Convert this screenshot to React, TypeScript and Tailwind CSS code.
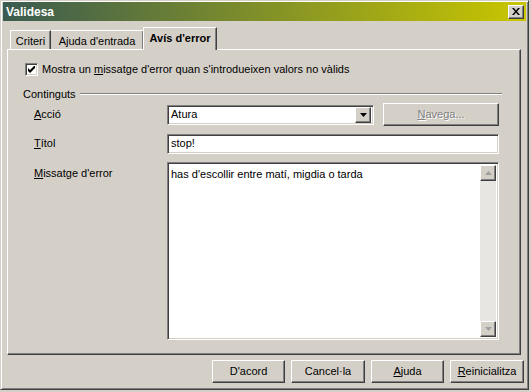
import React from "react";

const raised =
  "border border-t-white border-l-white border-r-[#404040] border-b-[#404040] shadow-[inset_-1px_-1px_0_#808080]";
const sunken =
  "border border-t-[#808080] border-l-[#808080] border-r-white border-b-white shadow-[inset_1px_1px_0_#404040,inset_-1px_-1px_0_#d4d0c8]";

function U({ c }: { c: string }) {
  return <span className="underline underline-offset-[1px]">{c}</span>;
}

function Btn({ children, w, disabled }: { children: React.ReactNode; w: string; disabled?: boolean }) {
  return (
    <div
      className={`${raised} ${w} h-[23px] flex items-center justify-center bg-[#d4d0c8] ${
        disabled ? "text-[#808080] [text-shadow:1px_1px_0_#fff]" : "text-black"
      }`}
    >
      {children}
    </div>
  );
}

export default function App() {
  return (
    <div
      className="w-[531px] h-[392px] bg-[#d4d0c8] overflow-hidden text-[11px] text-black"
      style={{ fontFamily: '"Liberation Sans", Arial, sans-serif' }}
    >
      <div className="w-[529px] h-[390px] border border-t-[#d4d0c8] border-l-[#d4d0c8] border-r-[#404040] border-b-[#404040] shadow-[inset_1px_1px_0_#fff,inset_-1px_-1px_0_#808080] p-[2px] flex flex-col">
        {/* title bar */}
        <div className="h-[19px] -mt-[1px] flex items-center justify-between pl-[3px] pr-[2px] bg-[linear-gradient(to_right,#3a5b50,#c9c600)]">
          <span className="text-white font-bold text-[12px] leading-none">Validesa</span>
          <div className={`${raised} w-[16px] h-[14px] bg-[#d4d0c8] flex items-center justify-center`}>
            <svg width="8" height="7" viewBox="0 0 8 7">
              <path d="M0 0h2l2 2.5L6 0h2L5 3.5 8 7H6L4 4.5 2 7H0l3-3.5z" fill="#000" />
            </svg>
          </div>
        </div>

        {/* tabs */}
        <div className="flex items-end pl-[7px] mt-[5px] h-[23px] relative z-10">
          <div className="h-[19px] w-[41px] border-t border-l border-t-white border-l-white border-r border-r-[#404040] shadow-[inset_-1px_0_0_#808080] flex items-center justify-center pt-[2px]">
            Criteri
          </div>
          <div className="h-[19px] w-[93px] border-t border-t-white border-r border-r-[#404040] shadow-[inset_-1px_0_0_#808080] flex items-center justify-center pt-[2px]">
            Ajuda d'entrada
          </div>
          <div className="h-[23px] w-[74px] -ml-[1px] border-t border-l border-t-white border-l-white border-r border-r-[#404040] shadow-[inset_-1px_0_0_#808080] bg-[#d4d0c8] flex items-center justify-center font-bold -mb-[1px] pb-[2px]">
            Avís d'error
          </div>
        </div>

        {/* panel */}
        <div className={`${raised} ml-[4px] w-[514px] h-[306px] flex flex-col`}>
          <div className="flex items-center pl-[17px] mt-[12px] h-[14px]">
            <div className={`${sunken} w-[13px] h-[13px] bg-white flex items-center justify-center`}>
              <svg width="7" height="7" viewBox="0 0 7 7">
                <path d="M0 2v3l2 2 5-5V-1L2 4z" fill="#000" />
              </svg>
            </div>
            <span className="ml-[4px]">
              Mostra un <U c="m" />issatge d'error quan s'introdueixen valors no vàlids
            </span>
          </div>

          <div className="flex items-center pl-[15px] mt-[12px] h-[12px]">
            <span>Continguts</span>
            <div className="ml-[4px] w-[422px] h-[2px] border-t border-t-[#808080] border-b border-b-white" />
          </div>

          <div className="flex items-center mt-[4px] h-[21px]">
            <div className="w-[159px] pl-[26px]">
              <U c="A" />cció
            </div>
            <div className={`${sunken} w-[207px] h-[20px] bg-white flex items-center justify-between pl-[3px] pr-[2px]`}>
              <span>Atura</span>
              <div className={`${raised} w-[16px] h-[16px] bg-[#d4d0c8] flex items-center justify-center`}>
                <svg width="7" height="4" viewBox="0 0 7 4">
                  <path d="M0 0h7L3.5 4z" fill="#000" />
                </svg>
              </div>
            </div>
            <div className="ml-[9px]">
              <Btn w="w-[116px]" disabled>
                <span>
                  <U c="N" />avega...
                </span>
              </Btn>
            </div>
          </div>

          <div className="flex items-center mt-[8px] h-[21px]">
            <div className="w-[159px] pl-[26px]">
              <U c="T" />ítol
            </div>
            <div className={`${sunken} w-[332px] h-[20px] bg-white flex items-center pl-[3px]`}>stop!</div>
          </div>

          <div className="flex mt-[8px]">
            <div className="w-[159px] pl-[26px] pt-[3px]">
              <U c="M" />issatge d'error
            </div>
            <div className={`${sunken} w-[332px] h-[178px] bg-white flex p-[2px]`}>
              <div className="flex-1 pl-[1px] pt-[1px]">has d'escollir entre matí, migdia o tarda</div>
              <div className="w-[16px] flex flex-col bg-[#e8e6e2]">
                <div className={`${raised} w-[16px] h-[16px] bg-[#d4d0c8] flex items-center justify-center`}>
                  <svg width="7" height="4" viewBox="0 0 7 4">
                    <path d="M0 4h7L3.5 0z" fill="#a0a0a0" />
                  </svg>
                </div>
                <div className="flex-1" />
                <div className={`${raised} w-[16px] h-[16px] bg-[#d4d0c8] flex items-center justify-center`}>
                  <svg width="7" height="4" viewBox="0 0 7 4">
                    <path d="M0 0h7L3.5 4z" fill="#a0a0a0" />
                  </svg>
                </div>
              </div>
            </div>
          </div>
        </div>

        {/* buttons */}
        <div className="flex justify-end gap-[6px] mt-[5px] pr-[2px]">
          <Btn w="w-[73px]">D'acord</Btn>
          <Btn w="w-[74px]">Cancel·la</Btn>
          <Btn w="w-[73px]">
            <span>
              <U c="A" />juda
            </span>
          </Btn>
          <Btn w="w-[74px]">
            <span>
              <U c="R" />einicialitza
            </span>
          </Btn>
        </div>
      </div>
    </div>
  );
}
